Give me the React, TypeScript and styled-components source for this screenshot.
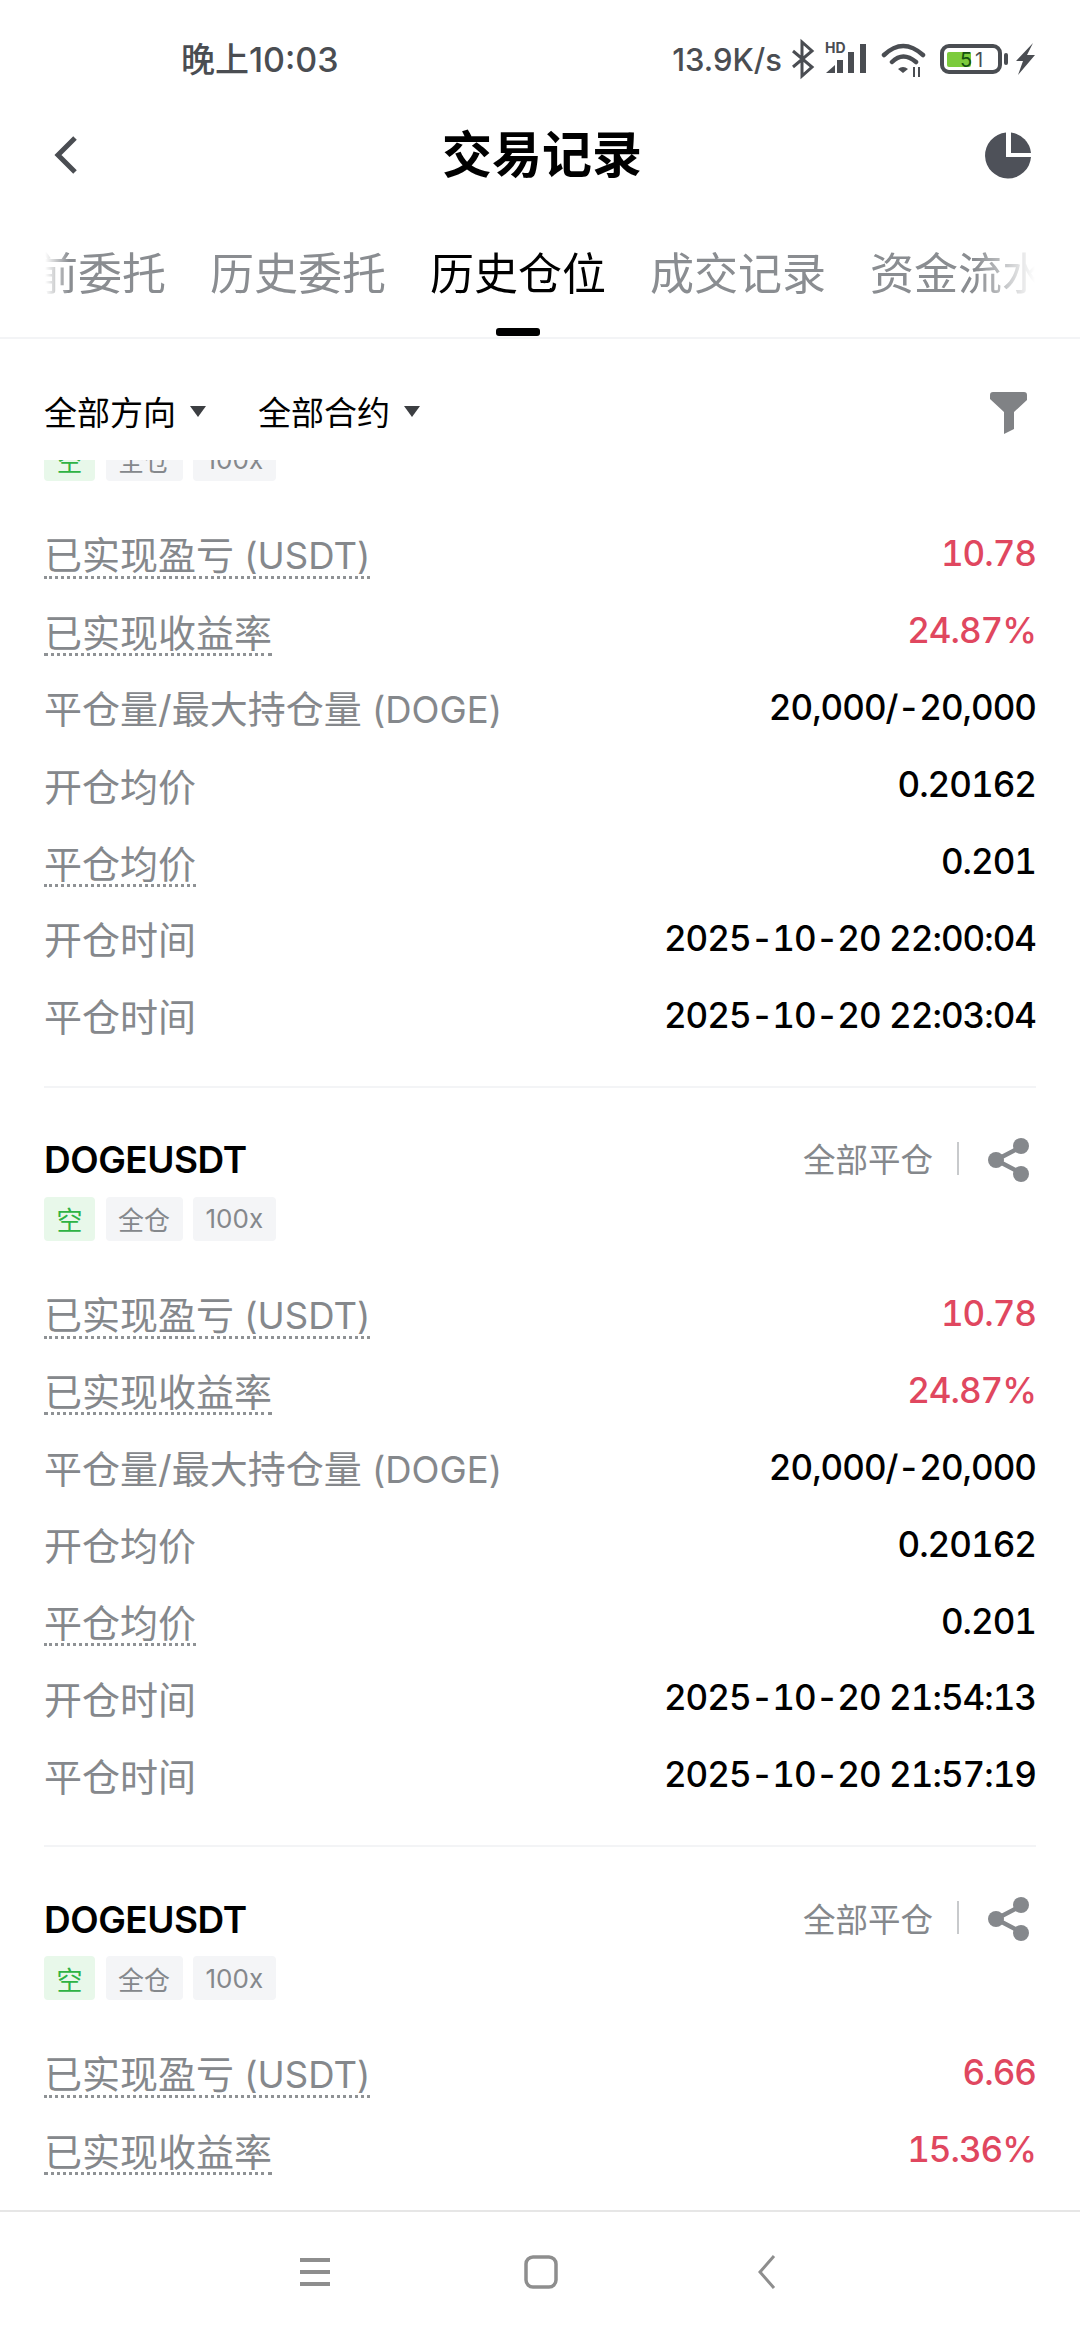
import styled, { createGlobalStyle } from 'styled-components'

type RowData = {
  label: string
  unit?: string
  value: string
  dotted?: boolean
  red?: boolean
}

type CardData = {
  rows: RowData[]
}

const profitRows = (pnl: string, rate: string): RowData[] => [
  { label: '已实现盈亏', unit: ' (USDT)', value: pnl, dotted: true, red: true },
  { label: '已实现收益率', value: rate, dotted: true, red: true },
]

const detailRows = (open: string, close: string): RowData[] => [
  { label: '平仓量/最大持仓量', unit: ' (DOGE)', value: '20,000/-20,000' },
  { label: '开仓均价', value: '0.20162' },
  { label: '平仓均价', value: '0.201', dotted: true },
  { label: '开仓时间', value: open },
  { label: '平仓时间', value: close },
]

const cards: CardData[] = [
  { rows: [...profitRows('10.78', '24.87%'), ...detailRows('2025-10-20 22:00:04', '2025-10-20 22:03:04')] },
  { rows: [...profitRows('10.78', '24.87%'), ...detailRows('2025-10-20 21:54:13', '2025-10-20 21:57:19')] },
  { rows: profitRows('6.66', '15.36%') },
]

const tabs = ['当前委托', '历史委托', '历史仓位', '成交记录', '资金流水']

const GlobalStyle = createGlobalStyle`
  html, body {
    margin: 0;
    padding: 0;
    background: #fff;
  }
  body {
    font-family: Inter, "Noto Sans CJK SC", sans-serif;
  }
`

const Page = styled.div`
  width: 1080px;
  height: 2340px;
  display: flex;
  flex-direction: column;
  background: #fff;
  overflow: hidden;
`

const StatusBar = styled.div`
  height: 60px;
  padding: 30px 45px 0 181px;
  display: flex;
  align-items: center;
  justify-content: space-between;
  color: #4a4d52;
`

const Clock = styled.div`
  font-size: 34px;
  font-weight: 500;
  line-height: 60px;
`

const StatusIcons = styled.div`
  display: flex;
  align-items: center;
`

const Speed = styled.div`
  font-size: 31px;
  font-weight: 500;
  line-height: 60px;
  margin-right: 8px;
`

const NavBar = styled.div`
  height: 100px;
  margin-top: 15px;
  padding: 0 48px 0 54px;
  display: grid;
  grid-template-columns: 1fr auto 1fr;
  align-items: center;
`

const Title = styled.div`
  margin-left: -2px;
  color: #000;
  font-size: 50px;
  font-weight: 700;
  line-height: 60px;
`

const PieIcon = styled.svg`
  width: 47px;
  height: 47px;
  justify-self: end;
`

const TabBar = styled.div`
  height: 132px;
  margin: 0 45px;
  flex: none;
  overflow: hidden;
  mask-image: linear-gradient(to right, transparent 0, #000 24px, #000 930px, transparent 990px);
`

const TabTrack = styled.div`
  margin-left: -55px;
  display: flex;
  gap: 45px;
  width: 1200px;
`

const Tab = styled.div<{ $active?: boolean }>`
  flex: none;
  position: relative;
  width: 175px;
  height: 132px;
  font-size: 44px;
  line-height: 138px;
  white-space: nowrap;
  color: ${p => (p.$active ? '#000' : '#8a8d91')};

  ${p =>
    p.$active &&
    `
    &::after {
      content: '';
      position: absolute;
      left: 66px;
      bottom: 1px;
      width: 44px;
      height: 8px;
      border-radius: 3px;
      background: #000;
    }
  `}
`

const FilterBar = styled.div`
  height: 123px;
  flex: none;
  box-sizing: border-box;
  padding: 26px 53px 0 44px;
  border-top: 2px solid #f3f4f6;
  display: flex;
  align-items: center;
  gap: 52px;
  background: #fff;
`

const FilterItem = styled.div`
  display: flex;
  align-items: center;
  gap: 14px;
  color: #000;
  font-size: 33px;
  line-height: 44px;
`

const Caret = styled.span`
  width: 0;
  height: 0;
  margin-top: -2px;
  border-left: 8px solid transparent;
  border-right: 8px solid transparent;
  border-top: 11px solid #3c3e42;
`

const FilterButton = styled.svg`
  margin-left: auto;
  width: 37px;
  height: 42px;
`

const List = styled.div`
  flex: 1;
  min-height: 0;
  overflow: hidden;
`

// first card is scrolled partly under the filter bar
const ListInner = styled.div`
  margin-top: -134px;
`

const Card = styled.div`
  margin: 0 44px;
  height: 759.5px;
  border-top: 2px solid #f3f4f6;
  box-sizing: border-box;
`

const CardHeader = styled.div`
  height: 70px;
  padding-top: 37px;
  display: flex;
  align-items: center;
  justify-content: space-between;
`

const Symbol = styled.div`
  color: #000;
  font-size: 37px;
  font-weight: 600;
  letter-spacing: -0.5px;
`

const HeaderActions = styled.div`
  display: flex;
  align-items: center;
  padding-right: 7px;
`

const CloseAll = styled.div`
  margin-top: 3px;
  color: #85888c;
  font-size: 32.5px;
  line-height: 44px;
`

const VDivider = styled.div`
  width: 2px;
  height: 33px;
  margin: -3px 29px 0 24px;
  background: #c8cacc;
`

const Tags = styled.div`
  margin-top: 2px;
  display: flex;
  gap: 10.5px;
`

const Tag = styled.div<{ $green?: boolean }>`
  height: 44px;
  padding: 0 12.5px;
  border-radius: 4px;
  display: flex;
  align-items: center;
  font-size: 26px;
  color: ${p => (p.$green ? '#2fb344' : '#85888c')};
  background: ${p => (p.$green ? '#e8f8ea' : '#f4f5f7')};
`

const Rows = styled.div`
  margin-top: 38px;
`

const Row = styled.div`
  height: 76.9px;
  display: flex;
  align-items: center;
  justify-content: space-between;
`

const Label = styled.div<{ $dotted?: boolean }>`
  color: #85888c;
  font-size: 38px;
  line-height: 40px;
  white-space: pre;
  border-bottom: 3px ${p => (p.$dotted ? 'dotted #8f9295' : 'solid transparent')};
`

const Unit = styled.span`
  font-size: 36.5px;
`

const Value = styled.div<{ $red?: boolean }>`
  margin-top: -8px;
  color: ${p => (p.$red ? '#e0475f' : '#000')};
  font-size: 35px;
  font-weight: 500;
  letter-spacing: -1px;
  font-variant-numeric: tabular-nums;
`

const BottomNav = styled.div`
  height: 128px;
  flex: none;
  border-top: 2px solid #e6e6e6;
  background: #fff;
  display: flex;
  align-items: center;
  justify-content: center;
  gap: 192px;
  padding-left: 2px;
`

const NavIcon = styled.svg`
  width: 34px;
  height: 34px;
  margin-bottom: 8px;
  fill: none;
  stroke: #8e8e8e;
  stroke-width: 3;
`

const Position = ({ rows }: CardData) => (
  <Card>
    <CardHeader>
      <Symbol>DOGEUSDT</Symbol>
      <HeaderActions>
        <CloseAll>全部平仓</CloseAll>
        <VDivider />
        <svg width="41" height="44" viewBox="0 0 41 44">
          <path d="M33 9 L8 22 L33 35" fill="none" stroke="#85888c" strokeWidth="4.5" />
          <circle cx="33" cy="8" r="8" fill="#85888c" />
          <circle cx="8" cy="22" r="8" fill="#85888c" />
          <circle cx="33" cy="36" r="8" fill="#85888c" />
        </svg>
      </HeaderActions>
    </CardHeader>
    <Tags>
      <Tag $green>空</Tag>
      <Tag>全仓</Tag>
      <Tag>100x</Tag>
    </Tags>
    <Rows>
      {rows.map(r => (
        <Row key={r.label}>
          <Label $dotted={r.dotted}>
            {r.label}
            {r.unit && <Unit>{r.unit}</Unit>}
          </Label>
          <Value $red={r.red}>{r.value}</Value>
        </Row>
      ))}
    </Rows>
  </Card>
)

export default function App() {
  return (
    <Page>
      <GlobalStyle />
      <StatusBar>
        <Clock>晚上10:03</Clock>
        <StatusIcons>
          <Speed>13.9K/s</Speed>
          <svg width="245" height="44" viewBox="0 0 245 44" fill="#4a4d52">
            {/* bluetooth */}
            <path d="M3 13 L22 29 L12 38 V4 L22 13 L3 29" fill="none" stroke="#4a4d52" strokeWidth="3" />
            {/* signal */}
            <text x="35" y="15" fontSize="14" fontWeight="700" fontFamily="Inter, sans-serif">HD</text>
            <path d="M36 35 L45 27 V35 Z" />
            <rect x="47" y="22" width="6" height="13" />
            <rect x="58" y="14" width="6" height="21" />
            <rect x="70" y="6" width="6" height="29" />
            {/* wifi */}
            <path d="M94 17 Q113 -1 133 17 M102 24 Q113 13 126 24" fill="none" stroke="#4a4d52" strokeWidth="4.5" strokeLinecap="round" />
            <path d="M108 31 Q113 27 118 31 L113 35 Z" />
            <path d="M124 29 V39 M129 29 V39" stroke="#4a4d52" strokeWidth="2" />
            {/* battery */}
            <rect x="152" y="8" width="58" height="26" rx="7" fill="none" stroke="#4a4d52" strokeWidth="4" />
            <rect x="157" y="14" width="24" height="15" rx="2" fill="#7ccb3c" />
            <text x="170" y="29" fontSize="20" fontFamily="Inter, sans-serif" fill="#14500f">5</text>
            <text x="185" y="29" fontSize="20" fontFamily="Inter, sans-serif">1</text>
            <rect x="214" y="15" width="4" height="12" rx="2" />
            {/* charging */}
            <path d="M243 5 L226 23 H233 L228 37 L245 17 H237 L243 5 Z" />
          </svg>
        </StatusIcons>
      </StatusBar>
      <NavBar>
        <svg width="24" height="38" viewBox="0 0 24 38">
          <path d="M21 2 L4 19 L21 36" fill="none" stroke="#4a4d52" strokeWidth="5" />
        </svg>
        <Title>交易记录</Title>
        <PieIcon viewBox="0 0 47 47">
          <path d="M21 0.5 A23 23 0 1 0 46 25 H21 Z" fill="#4e5159" />
          <path d="M26 0.5 A23 23 0 0 1 46 21 H26 Z" fill="#4e5159" />
        </PieIcon>
      </NavBar>
      <TabBar>
        <TabTrack>
          {tabs.map(t => (
            <Tab key={t} $active={t === '历史仓位'}>
              {t}
            </Tab>
          ))}
        </TabTrack>
      </TabBar>
      <FilterBar>
        <FilterItem>
          全部方向
          <Caret />
        </FilterItem>
        <FilterItem>
          全部合约
          <Caret />
        </FilterItem>
        <FilterButton viewBox="0 0 37 42">
          <path d="M0 3 Q0 0 3 0 H34 Q37 0 37 3 V8 L24 20 V37 L14 42 V20 L0 7 Z" fill="#808285" />
        </FilterButton>
      </FilterBar>
      <List>
        <ListInner>
          {cards.map((c, i) => (
            <Position key={i} rows={c.rows} />
          ))}
        </ListInner>
      </List>
      <BottomNav>
        <NavIcon viewBox="0 0 34 34">
          <path d="M2 5 H32 M2 17 H32 M2 29 H32" strokeWidth="4" />
        </NavIcon>
        <NavIcon viewBox="0 0 34 34">
          <rect x="2" y="2" width="30" height="30" rx="7" strokeWidth="3.5" />
        </NavIcon>
        <NavIcon viewBox="0 0 34 34">
          <path d="M24 1 L10 17 L24 33" />
        </NavIcon>
      </BottomNav>
    </Page>
  )
}
